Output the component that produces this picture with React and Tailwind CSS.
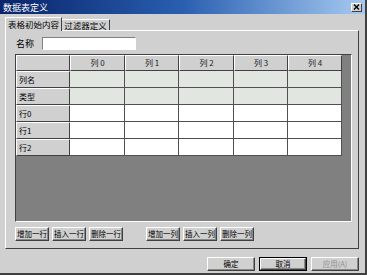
import React from 'react'

const font = { fontFamily: '"Noto Sans CJK SC", "DejaVu Sans", sans-serif' }

const colWidths = ['w-[55px]', 'w-[54px]', 'w-[55px]', 'w-[54px]', 'w-[54px]']
const rows = [
  { label: '列名', bg: 'bg-[#e1e7e0]' },
  { label: '类型', bg: 'bg-[#e1e7e0]' },
  { label: '行0', bg: 'bg-white' },
  { label: '行1', bg: 'bg-white' },
  { label: '行2', bg: 'bg-white' },
]

const Btn = ({ children, w = 'w-[34px]', def, disabled }) => (
  <div
    className={`${w} h-[14px] flex items-center justify-center bg-[#d0d0d0] text-[7.5px] leading-none ${
      def ? 'border border-black' : ''
    } ${disabled ? 'text-[#8f8f8f]' : 'text-black'}`}
  >
    <div className="w-full h-full flex items-center justify-center whitespace-nowrap border border-t-white border-l-white border-r-[#404040] border-b-[#404040] shadow-[inset_-1px_-1px_0_#888]">
      {children}
    </div>
  </div>
)

export default function App() {
  return (
    <div style={font} className="w-[367px] h-[275px] bg-[#d0d0d0] flex flex-col border-r-2 border-b-2 border-[#404040] overflow-hidden">
      {/* title bar */}
      <div className="h-[14px] shrink-0 flex items-center justify-between pl-[3px] pr-[3px] bg-gradient-to-r from-[#0a246a] via-[#2a5fb0] to-[#a6caf0]">
        <span className="text-white text-[9px] leading-none">数据表定义</span>
        <div className="w-[11px] h-[9px] bg-[#d0d0d0] flex items-center justify-center border border-t-white border-l-white border-r-[#404040] border-b-[#404040]">
          <svg width="7" height="6" viewBox="0 0 7 6">
            <path d="M1 0.5 L6 5.5 M6 0.5 L1 5.5" stroke="#000" strokeWidth="1.4" />
          </svg>
        </div>
      </div>

      <div className="flex-1 flex flex-col pl-[5px] pr-[6px] pt-[3px]">
        {/* tabs */}
        <div className="h-[13px] flex items-end">
          <div className="relative z-10 h-[14px] -mb-px w-[57px] bg-[#d0d0d0] border-t border-l border-white border-r border-r-[#404040] flex items-center justify-center whitespace-nowrap text-[8.5px] leading-none text-black">
            表格初始内容
          </div>
          <div className="h-[11px] w-[48px] bg-[#d0d0d0] border-t border-white border-r border-r-[#404040] flex items-center justify-center whitespace-nowrap text-[8.5px] leading-none text-black">
            过滤器定义
          </div>
        </div>

        {/* panel */}
        <div className="h-[219px] border border-t-white border-l-white border-r-[#404040] border-b-[#404040] flex flex-col pl-[9px] pr-[6px] pt-[6px]">
          <div className="flex items-center h-[12px]">
            <span className="w-[27px] pl-[1px] text-[9px] leading-none text-black">名称</span>
            <div className="w-[94px] h-[13px] bg-white border border-t-[#808080] border-l-[#808080] border-r-white border-b-white" />
          </div>

          {/* grid */}
          <div className="mt-[5px] h-[168px] w-[337px] bg-[#808080] border border-t-[#404040] border-l-[#404040] border-r-white border-b-white">
            <div className="flex h-[16px]">
              <div className="w-[54px] bg-[#d0d0d0] border-t border-l border-white border-r border-b border-r-[#404040] border-b-[#404040]" />
              {colWidths.map((w, i) => (
                <div
                  key={i}
                  className={`${w} bg-[#d0d0d0] border-t border-l border-white border-r border-b border-r-[#404040] border-b-[#404040] flex items-center justify-center text-[8px] leading-none text-[#222]`}
                >
                  列 {i}
                </div>
              ))}
            </div>
            {rows.map((r) => (
              <div key={r.label} className="flex h-[17px]">
                <div className="w-[54px] bg-[#d0d0d0] border-t border-l border-white border-r border-b border-r-[#404040] border-b-[#404040] flex items-center pl-[2px] text-[8px] leading-none text-black">
                  {r.label}
                </div>
                {colWidths.map((w, i) => (
                  <div key={i} className={`${w} ${r.bg} border-r border-b border-[#505050]`} />
                ))}
              </div>
            ))}
          </div>

          {/* row/col buttons */}
          <div className="mt-[5px] flex">
            <div className="flex gap-[3px]">
              <Btn>增加一行</Btn>
              <Btn>插入一行</Btn>
              <Btn>删除一行</Btn>
            </div>
            <div className="flex gap-[3px] ml-[23px]">
              <Btn>增加一列</Btn>
              <Btn>插入一列</Btn>
              <Btn>删除一列</Btn>
            </div>
          </div>
        </div>

        {/* dialog buttons */}
        <div className="mt-[8px] flex justify-end gap-[4px]">
          <Btn w="w-[48px]">确定</Btn>
          <Btn w="w-[48px]" def>取消</Btn>
          <Btn w="w-[48px]" disabled>应用(A)</Btn>
        </div>
      </div>
    </div>
  )
}
